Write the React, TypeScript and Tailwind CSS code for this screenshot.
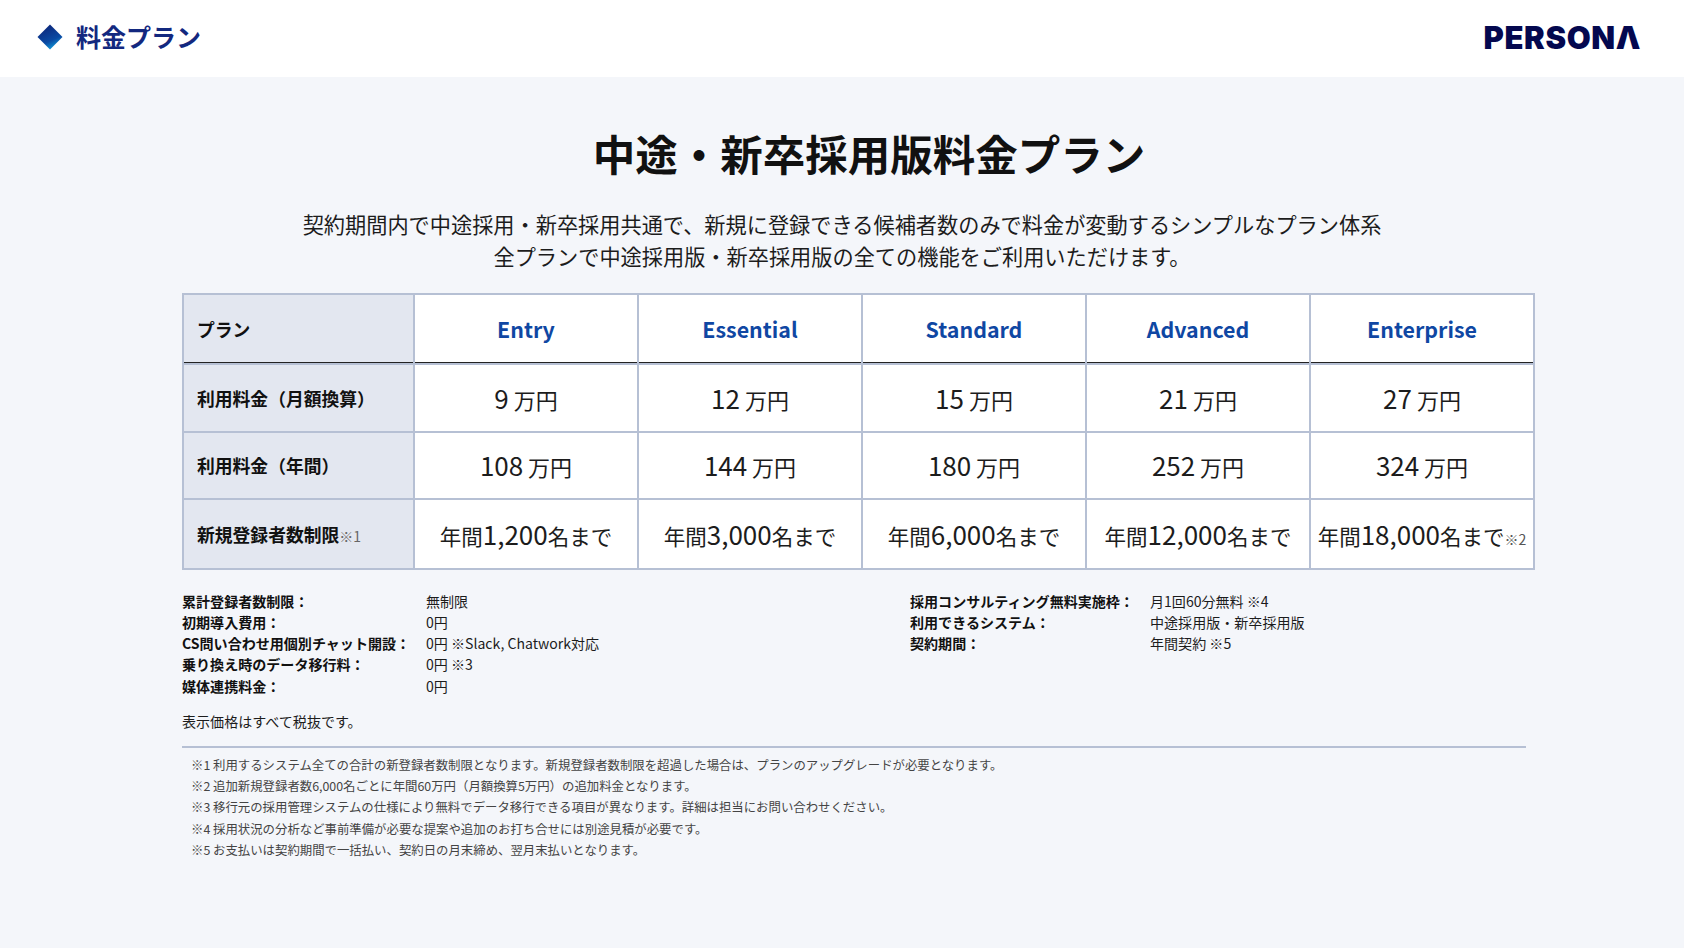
import React from 'react'

const plans = [
    { name: 'Entry', monthly: '9', yearly: '108', limit: '1,200' },
    { name: 'Essential', monthly: '12', yearly: '144', limit: '3,000' },
    { name: 'Standard', monthly: '15', yearly: '180', limit: '6,000' },
    { name: 'Advanced', monthly: '21', yearly: '252', limit: '12,000' },
    { name: 'Enterprise', monthly: '27', yearly: '324', limit: '18,000' },
]

const leftInfo = [
    ['累計登録者数制限：', '無制限'],
    ['初期導入費用：', '0円'],
    ['CS問い合わせ用個別チャット開設：', '0円 ※Slack, Chatwork対応'],
    ['乗り換え時のデータ移行料：', '0円 ※3'],
    ['媒体連携料金：', '0円'],
]

const rightInfo = [
    ['採用コンサルティング無料実施枠：', '月1回60分無料 ※4'],
    ['利用できるシステム：', '中途採用版・新卒採用版'],
    ['契約期間：', '年間契約 ※5'],
]

const notes = [
    '※1 利用するシステム全ての合計の新登録者数制限となります。新規登録者数制限を超過した場合は、プランのアップグレードが必要となります。',
    '※2 追加新規登録者数6,000名ごとに年間60万円（月額換算5万円）の追加料金となります。',
    '※3 移行元の採用管理システムの仕様により無料でデータ移行できる項目が異なります。詳細は担当にお問い合わせください。',
    '※4 採用状況の分析など事前準備が必要な提案や追加のお打ち合せには別途見積が必要です。',
    '※5 お支払いは契約期間で一括払い、契約日の月末締め、翌月末払いとなります。',
]

const thClass = 'border-2 border-[#b6c0d4] bg-[#e3e7f0] pl-[13px] text-left text-[17.8px] font-bold text-[#111]'
const tdClass = 'border-2 border-[#b6c0d4] bg-white pb-[2px] text-center text-[#1c1c1c] whitespace-nowrap'

const Price = ({ value }: { value: string }) => (
    <>
        <span className="text-[26px]">{value}</span>
        <span className="text-[22px]"> 万円</span>
    </>
)

const InfoList = ({ rows, labelWidth }: { rows: string[][]; labelWidth: string }) => (
    <div>
        {rows.map(([label, value]) => (
            <div key={label} className="flex h-[21.3px] items-center text-[14.05px] leading-[21.3px]">
                <span className={`${labelWidth} font-bold text-[#111]`}>{label}</span>
                <span className="text-[#1c1c1c]">{value}</span>
            </div>
        ))}
    </div>
)

export default function App() {
    return (
        <div className="min-h-screen bg-[#f4f6fa] font-['Noto_Sans_CJK_JP','Noto_Sans',sans-serif]">
            <header className="flex h-[77px] items-center justify-between bg-white pb-[3px] pl-[37px] pr-[43px]">
                <div className="flex items-center gap-[13px]">
                    <svg width="26" height="26" viewBox="0 0 26 26">
                        <defs>
                            <linearGradient id="dia" x1="0.3" y1="0.1" x2="0.7" y2="1">
                                <stop offset="0" stopColor="#0d2a7e" />
                                <stop offset="0.6" stopColor="#0a4aa3" />
                                <stop offset="1" stopColor="#10a4e0" />
                            </linearGradient>
                        </defs>
                        <path d="M13 0.5 L25.5 13 L13 25.5 L0.5 13 Z" fill="url(#dia)" />
                    </svg>
                    <span className="text-[25px] font-bold text-[#13287f]">料金プラン</span>
                </div>
                <span className="font-['Inter',sans-serif] text-[31px] font-black leading-none tracking-[0.6px] text-[#04084f]">PERSONΛ</span>
            </header>

            <main className="flex flex-col">
                <h1 className="mt-[42px] pl-[54px] text-center text-[42.5px] font-bold leading-[68px] text-[#111]">中途・新卒採用版料金プラン</h1>
                <div className="mt-[21px] text-center text-[21.2px] leading-[32px] text-[#1c1c1c]">
                    <p>契約期間内で中途採用・新卒採用共通で、新規に登録できる候補者数のみで料金が変動するシンプルなプラン体系</p>
                    <p>全プランで中途採用版・新卒採用版の全ての機能をご利用いただけます。</p>
                </div>

                <table className="ml-[182px] mt-[21px] w-[1353px] table-fixed border-collapse">
                    <colgroup>
                        <col className="w-[231px]" />
                    </colgroup>
                    <tbody>
                        <tr className="h-[70px]">
                            <th className={`${thClass} shadow-[inset_0_-1px_0_#222]`}>プラン</th>
                            {plans.map(p => (
                                <td key={p.name} className="border-2 border-[#b6c0d4] bg-white text-center text-[21.4px] font-semibold text-[#0f47a3] shadow-[inset_0_-1px_0_#222]">{p.name}</td>
                            ))}
                        </tr>
                        <tr className="h-[68px]">
                            <th className={thClass}>利用料金（月額換算）</th>
                            {plans.map(p => <td key={p.name} className={tdClass}><Price value={p.monthly} /></td>)}
                        </tr>
                        <tr className="h-[67px]">
                            <th className={thClass}>利用料金（年間）</th>
                            {plans.map(p => <td key={p.name} className={tdClass}><Price value={p.yearly} /></td>)}
                        </tr>
                        <tr className="h-[70px]">
                            <th className={thClass}>
                                新規登録者数制限<span className="text-[14px] font-normal text-[#666]">※1</span>
                            </th>
                            {plans.map((p, i) => (
                                <td key={p.name} className={tdClass}>
                                    <span className="text-[21.5px]">年間</span>
                                    <span className="text-[26px]">{p.limit}</span>
                                    <span className="text-[21.5px]">名まで</span>
                                    {i === 4 && <span className="text-[14px] text-[#555]">※2</span>}
                                </td>
                            ))}
                        </tr>
                    </tbody>
                </table>

                <div className="ml-[182px] mt-[20.5px] flex">
                    <div className="w-[728px]">
                        <InfoList rows={leftInfo} labelWidth="w-[244px]" />
                    </div>
                    <InfoList rows={rightInfo} labelWidth="w-[240px]" />
                </div>

                <p className="ml-[182px] mt-[14.5px] text-[14.05px] leading-[21px] text-[#1c1c1c]">表示価格はすべて税抜です。</p>

                <div className="ml-[182px] mt-[14px] w-[1344px] border-t-2 border-[#b6c0d4] pl-[9px] pt-[6.5px]">
                    {notes.map(n => (
                        <p key={n} className="text-[12.4px] leading-[21.2px] text-[#444]">{n}</p>
                    ))}
                </div>
            </main>
        </div>
    )
}
